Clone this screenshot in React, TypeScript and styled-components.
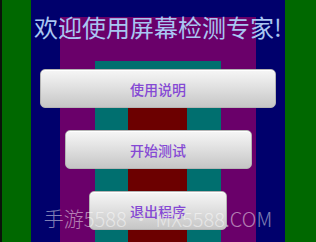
import React from "react";
import styled, { createGlobalStyle } from "styled-components";

const Global = createGlobalStyle`
  html, body { margin: 0; padding: 0; }
  body { width: 316px; height: 242px; overflow: hidden; }
`;

const layer = (c: string) => `linear-gradient(${c}, ${c})`;

const Screen = styled.div`
  position: relative;
  width: 316px;
  height: 242px;
  overflow: hidden;
  display: flex;
  flex-direction: column;
  align-items: center;
  box-sizing: border-box;
  padding-top: 15px;
  font-family: "Noto Sans CJK SC", "Noto Sans", sans-serif;
  background:
    ${layer("#0a140a")} 0 0 / 2px 100% no-repeat,
    ${layer("#6c0000")} 128px 105px / 59px 100% no-repeat,
    ${layer("#006f6f")} 95px 61px / 126px 100% no-repeat,
    ${layer("#6a006a")} 60px 17px / 196px 100% no-repeat,
    ${layer("#00006c")} 31px 0 / 254px 100% no-repeat,
    #006800;
`;

const Title = styled.h1`
  margin: 0;
  font-size: 24px;
  line-height: 24px;
  font-weight: 400;
  color: #a9c6f2;
  white-space: nowrap;
`;

const ButtonStack = styled.div`
  display: flex;
  flex-direction: column;
  align-items: center;
  gap: 22px;
  margin-top: 30px;
`;

const Button = styled.button<{ $w: number }>`
  width: ${(p) => p.$w}px;
  height: 39px;
  margin: 0;
  padding: 0;
  border: 1px solid #b4b4b4;
  border-radius: 5px;
  background: linear-gradient(#f6f6f6 0%, #e6e6e6 35%, #c6c6c6 100%);
  box-shadow: inset 0 1px 0 #ffffff;
  font-family: "Noto Sans CJK SC", sans-serif;
  font-size: 14px;
  font-weight: 500;
  color: #8549d4;
  display: flex;
  align-items: center;
  justify-content: center;
`;

const Watermark = styled.div`
  position: absolute;
  left: 0;
  right: 0;
  top: 208px;
  text-align: center;
  font-family: "Noto Sans CJK SC", "Noto Sans", sans-serif;
  font-size: 20px;
  line-height: 22px;
  font-weight: 300;
  color: rgba(255, 255, 255, 0.5);
  white-space: nowrap;
  pointer-events: none;
`;

export default function App() {
  return (
    <>
      <Global />
      <Screen>
        <Title>欢迎使用屏幕检测专家!</Title>
        <ButtonStack>
          <Button $w={236}>使用说明</Button>
          <Button $w={187}>开始测试</Button>
          <Button $w={138}>退出程序</Button>
        </ButtonStack>
        <Watermark>手游5588 • MX5588.COM</Watermark>
      </Screen>
    </>
  );
}
